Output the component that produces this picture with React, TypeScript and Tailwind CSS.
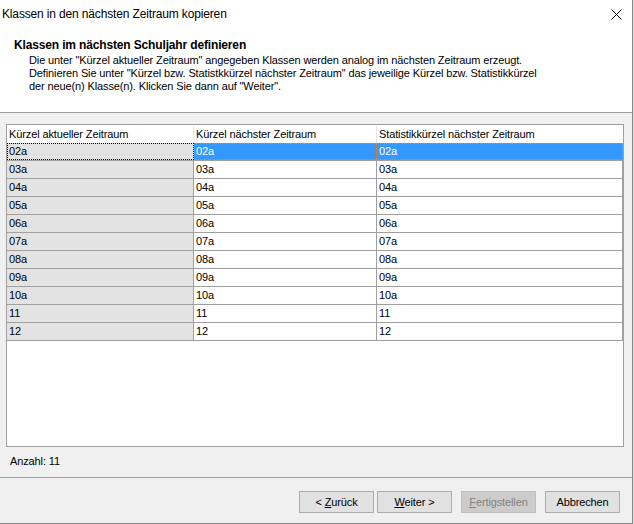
import React from "react";

const rows = ["02a", "03a", "04a", "05a", "06a", "07a", "08a", "09a", "10a", "11", "12"];

function CloseIcon() {
  return (
    <svg width="11" height="11" viewBox="0 0 11 11" aria-hidden="true">
      <path d="M0.5 0.5 L10.5 10.5 M10.5 0.5 L0.5 10.5" stroke="#000" strokeWidth="1" fill="none" />
    </svg>
  );
}

function Btn({
  children,
  disabled,
}: {
  children: React.ReactNode;
  disabled?: boolean;
}) {
  return (
    <button
      type="button"
      className={
        disabled
          ? "h-[22px] w-[75px] border border-[#bfbfbf] bg-[#cccccc] text-[#838383] text-[11px] leading-none"
          : "h-[22px] w-[75px] border border-[#adadad] bg-[#e1e1e1] text-black text-[11px] leading-none"
      }
    >
      {children}
    </button>
  );
}

export default function App() {
  return (
    <div className="w-[634px] h-[524px] bg-[#d9d9d9] flex font-['Liberation_Sans',sans-serif] text-black tracking-[-0.12px]">
      {/* WINDOW */}
      <div className="w-[633px] h-[524px] border-r border-b border-[#8a8a8a] bg-[#f0f0f0] flex flex-col">
        {/* HEADER */}
        <div className="h-[113px] bg-white border-b border-[#a0a0a0] flex flex-col">
          <div className="h-[28px] flex items-center justify-between pl-[2px] pr-[10px]">
            <span className="text-[12px] tracking-[-0.15px]">Klassen in den nächsten Zeitraum kopieren</span>
            <CloseIcon />
          </div>
          <div className="pl-[14px] mt-[10px] text-[12px] font-bold leading-[15px] tracking-[-0.15px]">
            Klassen im nächsten Schuljahr definieren
          </div>
          <div className="pl-[29px] mt-[1px] text-[11px] leading-[13px]">
            <div>Die unter "Kürzel aktueller Zeitraum" angegeben Klassen werden analog im nächsten Zeitraum erzeugt.</div>
            <div>Definieren Sie unter "Kürzel bzw. Statistkkürzel nächster Zeitraum" das jeweilige Kürzel bzw. Statistikkürzel</div>
            <div>der neue(n) Klasse(n). Klicken Sie dann auf "Weiter".</div>
          </div>
        </div>

        {/* TABLE */}
        <div className="pt-[11px] pl-[6px] pr-[8px]">
          <div className="h-[323px] border border-[#a0a0a0] bg-white text-[11px] leading-none">
            <div className="flex h-[18px] pt-[1px]">
              <div className="w-[187px] border-r border-[#e5e5e5] flex items-center pl-[2px]">Kürzel aktueller Zeitraum</div>
              <div className="w-[183px] border-r border-[#e5e5e5] flex items-center pl-[2px]">Kürzel nächster Zeitraum</div>
              <div className="w-[246px] flex items-center pl-[2px]">Statistikkürzel nächster Zeitraum</div>
            </div>
            {rows.map((r, i) =>
              i === 0 ? (
                <div key={r} className="flex h-[18px] border-b border-[#a0a0a0]">
                  <div className="w-[187px] bg-[#e3e3e3] border border-dotted border-black flex items-center pl-[1px]">{r}</div>
                  <div className="flex-1 flex bg-[#3399ff] text-white border border-dotted border-[#e8853a]">
                    <div className="w-[182px] border-r border-[#e8853a] border-dotted flex items-center pl-[1px]">{r}</div>
                    <div className="flex-1 flex items-center pl-[2px]">{r}</div>
                  </div>
                </div>
              ) : (
                <div key={r} className="flex h-[18px] border-b border-[#a0a0a0]">
                  <div className="w-[187px] bg-[#e3e3e3] border-r border-[#a0a0a0] flex items-center pl-[2px]">{r}</div>
                  <div className="w-[183px] border-r border-[#a0a0a0] flex items-center pl-[2px]">{r}</div>
                  <div className="w-[246px] border-r border-[#a0a0a0] flex items-center pl-[2px]">{r}</div>
                </div>
              )
            )}
          </div>
        </div>

        <div className="h-[30px] flex items-center pb-[2px] pl-[10px] text-[11px]">Anzahl: 11</div>

        {/* FOOTER */}
        <div className="flex-1 border-t border-[#a0a0a0] flex justify-end items-start pt-[13px] pr-[12px]">
          <Btn>
            &lt; <span className="underline">Z</span>urück
          </Btn>
          <div className="w-[3px]" />
          <Btn>
            <span className="underline">W</span>eiter &gt;
          </Btn>
          <div className="w-[9px]" />
          <Btn disabled>
            <span className="underline">F</span>ertigstellen
          </Btn>
          <div className="w-[9px]" />
          <Btn>Abbrechen</Btn>
        </div>
      </div>
    </div>
  );
}
